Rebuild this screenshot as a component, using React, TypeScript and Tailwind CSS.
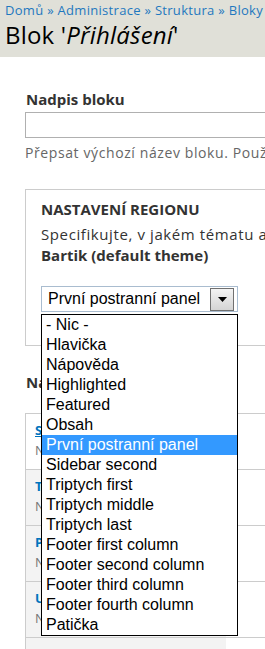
import React from "react";

const items = [
  "- Nic -",
  "Hlavička",
  "Nápověda",
  "Highlighted",
  "Featured",
  "Obsah",
  "První postranní panel",
  "Sidebar second",
  "Triptych first",
  "Triptych middle",
  "Triptych last",
  "Footer first column",
  "Footer second column",
  "Footer third column",
  "Footer fourth column",
  "Patička",
];

const tabs = [
  { title: "Stránky", sum: "Není omezeno" },
  { title: "Typy obsahu", sum: "Není omezeno" },
  { title: "Práva", sum: "Není omezeno" },
  { title: "Uživatelé", sum: "Není omezeno" },
  { title: "Další", sum: "" },
];

export default function App() {
  return (
    <div className="relative w-[265px] h-[649px] overflow-hidden bg-white font-['Open_Sans',sans-serif] text-[#333]">
      <div className="w-[600px]">
        {/* Header */}
        <div className="h-[57px] bg-[#e0e0d8] px-[5px] pt-[2px]">
          <div className="text-[13px] leading-[17px] tracking-[0.3px] whitespace-nowrap text-[#1f78bf]">
            Domů » Administrace » Struktura » Bloky
          </div>
          <div className="mt-[1px] text-[24px] leading-[30px] tracking-[0.2px] whitespace-nowrap text-black">
            Blok '<i>Přihlášení</i>'
          </div>
        </div>

        <div className="pl-[25px]">
          <div className="mt-[32px] pl-[1px] text-[15px] leading-[20px] font-bold text-[#333]">
            Nadpis bloku
          </div>
          <div className="mt-[3px] h-[26px] w-[400px] border border-[#b0b0b0] bg-white" />
          <div className="mt-[6px] text-[14px] leading-[18px] tracking-[0.6px] text-[#666] whitespace-nowrap">
            Přepsat výchozí název bloku. Použijte &lt;none&gt; pro zobrazení bez nadpisu.
          </div>

          {/* Fieldset */}
          <div className="mt-[27px] w-[400px] border border-[#ccc] pt-[9px] pl-[15px] pb-[33px]">
            <div className="text-[15px] leading-[20px] font-bold text-[#333]">NASTAVENÍ REGIONU</div>
            <div className="mt-[6px] text-[15px] leading-[18px] tracking-[0.6px] text-[#333] whitespace-nowrap">
              Specifikujte, v jakém tématu a oblasti je tento blok zobrazen.
            </div>
            <div className="mt-[2px] text-[15px] leading-[20px] font-bold text-[#333]">
              Bartik (default theme)
            </div>
            <div className="relative mt-[21px] w-[197px]">
              <div className="flex h-[26px] w-[197px] items-center border border-[#a9bccf] bg-white font-['Liberation_Sans',Arial,sans-serif]">
                <span className="pl-[6px] text-[16px] leading-[20px] text-black whitespace-nowrap">
                  První postranní panel
                </span>
                <div className="ml-auto mr-[3px] flex h-[23px] w-[24px] items-center justify-center border border-[#707070] bg-gradient-to-b from-[#f4f4f4] to-[#d4d4d4]">
                  <svg width="9" height="5" viewBox="0 0 9 5">
                    <path d="M0 0 H9 L4.5 5 Z" fill="#000" />
                  </svg>
                </div>
              </div>
              {/* Open dropdown list */}
              <div className="absolute left-0 top-[28px] z-10 w-[197px] border border-black bg-white font-['Liberation_Sans',Arial,sans-serif]">
                {items.map((it) => (
                  <div
                    key={it}
                    className={
                      it === "První postranní panel"
                        ? "h-[20px] pl-[4px] text-[16px] leading-[20px] whitespace-nowrap bg-[#3399ff] text-white"
                        : "h-[20px] pl-[4px] text-[16px] leading-[20px] whitespace-nowrap text-black"
                    }
                  >
                    {it}
                  </div>
                ))}
              </div>
            </div>
          </div>

          <div className="mt-[26px] pl-[1px] text-[15px] leading-[20px] font-bold text-[#333]">
            Nastavení viditelnosti
          </div>

          {/* Vertical tabs */}
          <div className="mt-[21px] w-[400px] border-t border-l border-[#ccc]">
            {tabs.map((t, i) => (
              <div key={t.title} className="flex h-[56px] border-b border-[#ccc]">
                <div
                  className={
                    i === 0
                      ? "w-[200px] bg-white pl-[9px] pt-[6px]"
                      : "w-[200px] bg-[#f3f3f3] pl-[9px] pt-[6px]"
                  }
                >
                  <div
                    className={
                      i === 0
                        ? "text-[13px] leading-[20px] font-bold text-[#0074bd] underline whitespace-nowrap"
                        : "text-[13px] leading-[20px] font-bold text-[#0074bd] whitespace-nowrap"
                    }
                  >
                    {t.title}
                  </div>
                  <div className="text-[13px] leading-[20px] text-[#777] whitespace-nowrap">{t.sum}</div>
                </div>
                <div className="flex-1 bg-white" />
              </div>
            ))}
          </div>
        </div>
      </div>
    </div>
  );
}
